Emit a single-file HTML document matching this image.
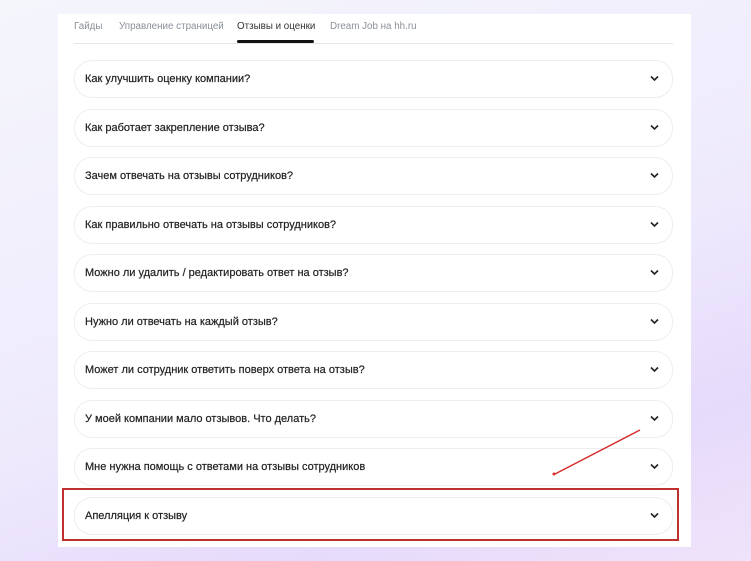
<!DOCTYPE html><html><head><meta charset="utf-8"><style>
body{margin:0;width:751px;height:561px;overflow:hidden;font-family:"Liberation Sans",sans-serif;background:linear-gradient(160deg,#f5f6fc 0%,#eeeafc 55%,#e6dbfb 80%,#efe2fa 100%);position:relative}
.panel{position:absolute;left:58px;top:14px;width:633px;height:533px;background:#fff}
.tabs{position:absolute;left:16px;top:0;width:599px;height:29px;border-bottom:1px solid #e4e6ea}
.tab{position:absolute;top:7px;font-size:9.8px;color:#8a8f98;white-space:nowrap}
.tab.a{color:#333}
.ul{position:absolute;left:163px;top:26px;width:77px;height:3px;background:#111;border-radius:2px}
.item{position:absolute;width:597px;height:36px;border:1px solid #eceef2;border-radius:18px;font-size:11px;color:#222;line-height:36px;-webkit-text-stroke:0.2px #222}
.item span{position:absolute;left:10px}
.item svg{position:absolute;right:13px;top:14px}
.red{position:absolute;left:62px;top:488px;width:613px;height:49px;border:2px solid #c0302f}
</style></head><body>
<div class="panel">
<div class="tabs">
<div class="tab" style="left:0">Гайды</div>
<div class="tab" style="left:45px">Управление страницей</div>
<div class="tab a" style="left:163px">Отзывы и оценки</div>
<div class="tab" style="left:256px">Dream Job на hh.ru</div>
<div class="ul"></div>
</div>
</div>
<div id="list"></div>
<div class="red"></div>
<svg style="position:absolute;left:0;top:0" width="751" height="561"><line x1="640" y1="430" x2="555" y2="474" stroke="#d62c2c" stroke-width="1.5"/><circle cx="554" cy="474" r="1.5" fill="#d62c2c"/></svg>
<script>
const t=["Как улучшить оценку компании?","Как работает закрепление отзыва?","Зачем отвечать на отзывы сотрудников?","Как правильно отвечать на отзывы сотрудников?","Можно ли удалить / редактировать ответ на отзыв?","Нужно ли отвечать на каждый отзыв?","Может ли сотрудник ответить поверх ответа на отзыв?","У моей компании мало отзывов. Что делать?","Мне нужна помощь с ответами на отзывы сотрудников","Апелляция к отзыву"];
let h="";t.forEach((s,i)=>{const y=60+i*48.5;h+=`<div class="item" style="left:74px;top:${y}px"><span>${s}</span><svg width="9" height="7" viewBox="0 0 9 7"><path d="M1 1.5 4.5 5 8 1.5" fill="none" stroke="#222" stroke-width="1.6"/></svg></div>`});
document.getElementById('list').innerHTML=h;
</script>
</body></html>
